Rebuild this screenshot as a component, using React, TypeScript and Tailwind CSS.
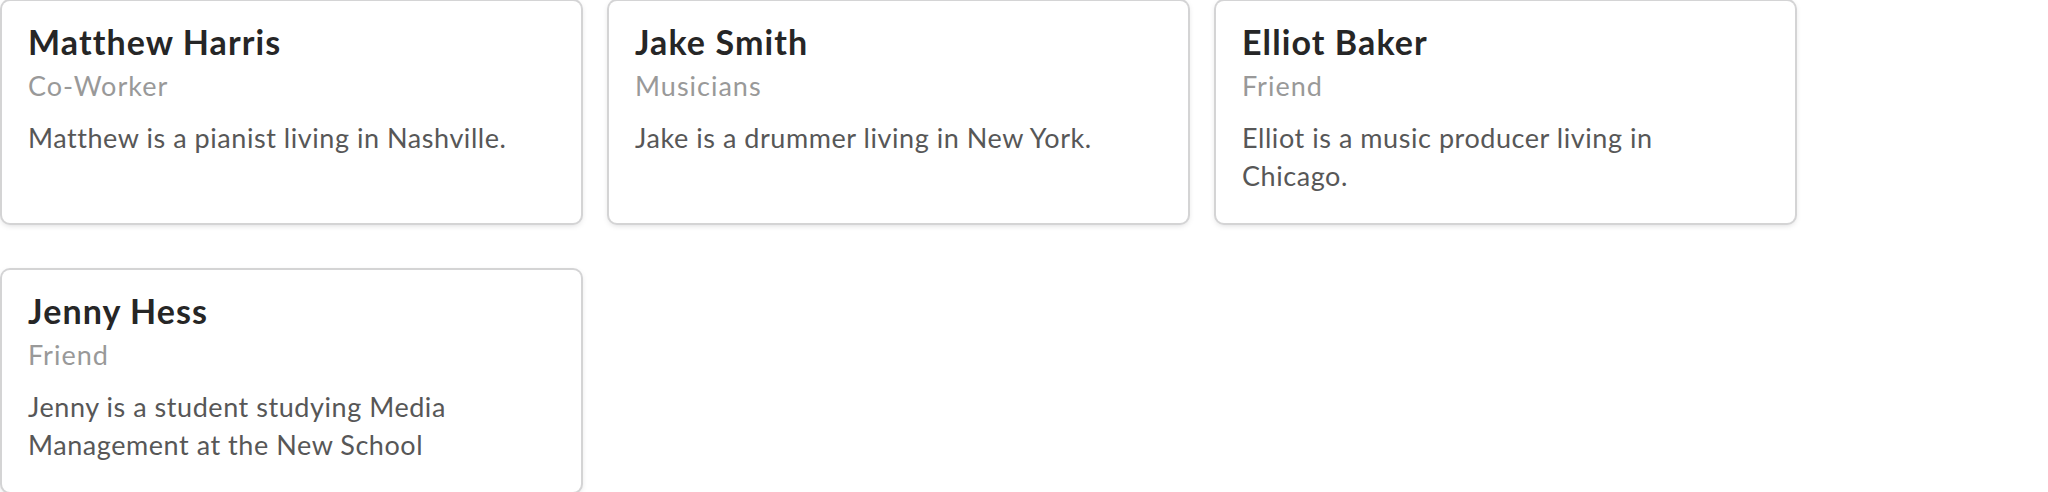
const people = [
  { name: 'Matthew Harris', meta: 'Co-Worker', description: 'Matthew is a pianist living in Nashville.' },
  { name: 'Jake Smith', meta: 'Musicians', description: 'Jake is a drummer living in New York.' },
  { name: 'Elliot Baker', meta: 'Friend', description: 'Elliot is a music producer living in Chicago.' },
  { name: 'Jenny Hess', meta: 'Friend', description: 'Jenny is a student studying Media Management at the New School' },
]

function Card({ name, meta, description }: { name: string; meta: string; description: string }) {
  return (
    <div className="w-[579px] bg-white rounded-[8px] pl-[26px] pr-[40px] pt-[21px] pb-[28px] shadow-[0_2px_6px_0_#d4d4d5,0_0_0_2px_#d4d4d5]">
      <div className="text-[34px] leading-[40px] font-bold tracking-[1.1px] text-[#262626]">{name}</div>
      <div className="mt-[5px] text-[27px] leading-[37px] tracking-[1px] text-[#999999]">{meta}</div>
      <div className="mt-[15px] text-[27px] leading-[38px] tracking-[0.55px] text-[#575757]">{description}</div>
    </div>
  )
}

export default function App() {
  return (
    <div className="min-h-screen bg-white font-['Lato',sans-serif] pt-[1px] px-[2px]">
      <div className="flex flex-wrap gap-x-[28px] gap-y-[47px]">
        {people.map((p) => (
          <Card key={p.name} {...p} />
        ))}
      </div>
    </div>
  )
}
